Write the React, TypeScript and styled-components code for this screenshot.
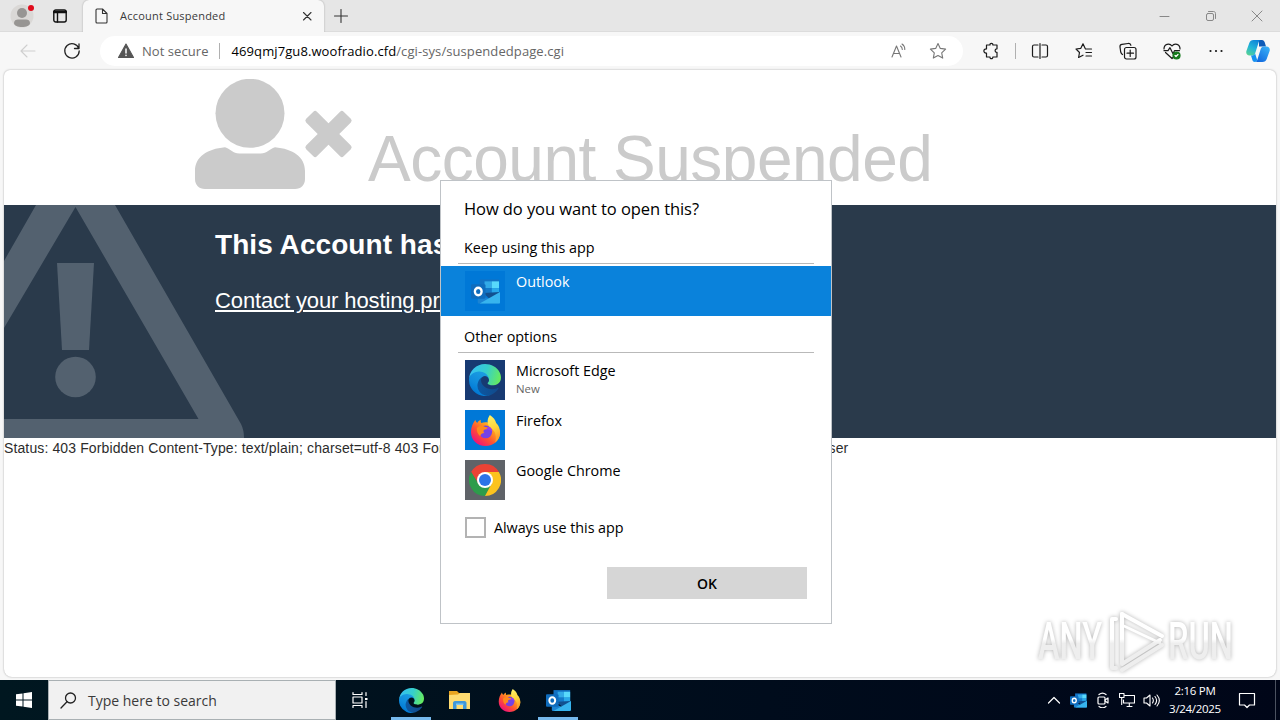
import React, { FC, ReactNode } from 'react';
import styled, { createGlobalStyle, css } from 'styled-components';

const GlobalStyle = createGlobalStyle`
  * {
    box-sizing: border-box;
  }
  body {
    margin: 0;
    overflow: hidden;
    font-family: 'Open Sans', 'Noto Sans', sans-serif;
  }
  svg {
    display: block;
    flex: none;
  }
`;

const Desktop = styled.div`
  position: relative;
  display: flex;
  flex-direction: column;
  width: 1280px;
  height: 720px;
  overflow: hidden;
  background: #f7f7f7;
`;

/* ---------- browser chrome ---------- */

const TabStrip = styled.div`
  display: flex;
  height: 32px;
  background: #e6e6e6;
  border-bottom: 1px solid #dcdcdc;
`;

const StripLeft = styled.div`
  display: flex;
  align-items: center;
  gap: 17px;
  width: 83px;
  padding-left: 10px;
`;

const Tab = styled.div`
  display: flex;
  align-items: center;
  width: 241px;
  height: 32px;
  padding: 0 10px 0 11px;
  border-radius: 6px 6px 0 0;
  background: #f7f7f7;
  box-shadow: 0 0 2px rgba(0, 0, 0, 0.3);
  clip-path: inset(0 -3px 0 -3px);
`;

const TabTitle = styled.span`
  flex: 1;
  margin-left: 10px;
  padding-bottom: 2px;
  color: #3a3a3a;
  font-size: 11px;
  letter-spacing: 0.22px;
`;

const NewTab = styled.div`
  display: flex;
  align-items: center;
  flex: 1;
  padding-left: 10px;
`;

const WindowButtons = styled.div`
  display: flex;
  align-items: center;
  gap: 34px;
  padding-right: 17px;
`;

const Toolbar = styled.div`
  display: flex;
  align-items: center;
  height: 38px;
  padding: 0 10px 0 19px;
`;

const NavButtons = styled.div`
  display: flex;
  align-items: center;
  gap: 26px;
  width: 81px;
`;

const AddressBar = styled.div`
  display: flex;
  align-items: center;
  width: 863px;
  height: 30px;
  padding: 0 16px 0 17px;
  border-radius: 15px;
  background: white;
  font-size: 13px;
`;

const NotSecure = styled.span`
  margin-left: 7px;
  color: #666;
  letter-spacing: 0.06px;
`;

const Divider = styled.span<{ $margin: string }>`
  width: 1px;
  height: 16px;
  margin: ${(p) => p.$margin};
  background: #b0b0b0;
`;

const Url = styled.span`
  flex: 1;
  color: #666;
  letter-spacing: 0.09px;
  b {
    color: black;
    font-weight: 400;
  }
`;

const AddressActions = styled.div`
  display: flex;
  gap: 21px;
`;

const ToolbarActions = styled.div`
  display: flex;
  align-items: center;
  flex: 1;
  padding-left: 19px;
`;

const ActionGroup = styled.div`
  display: flex;
  align-items: center;
  gap: 26px;
  margin-right: auto;
`;

/* ---------- page ---------- */

const Page = styled.main`
  height: 607px;
  margin: 0 4px 3px;
  border-radius: 6px 6px 8px 8px;
  background: white;
  box-shadow: 0 0 2px rgba(0, 0, 0, 0.35);
  overflow: hidden;
  font-family: 'Liberation Sans', Arial, sans-serif;
`;

const PageHeader = styled.header`
  display: flex;
  align-items: flex-end;
  gap: 15px;
  height: 135px;
  padding: 0 0 16px 191px;
  color: #cbcbcb;
`;

const PageTitle = styled.h1`
  margin: 0 0 -7px;
  font-size: 64px;
  font-weight: 400;
  line-height: 74px;
  letter-spacing: -0.5px;
  white-space: nowrap;
`;

const Banner = styled.section`
  display: flex;
  height: 233px;
  background: #2a3a4b;
  color: white;
`;

const BannerText = styled.div`
  margin-left: -33px;
  padding-top: 24px;
`;

const BannerTitle = styled.h2`
  margin: 0 0 25px;
  font-size: 28px;
  font-weight: 700;
  line-height: 32px;
  letter-spacing: 0.06px;
  white-space: nowrap;
`;

const BannerLink = styled.a`
  font-size: 22px;
  line-height: 30px;
  letter-spacing: -0.12px;
  text-decoration: underline;
`;

const StatusLine = styled.p`
  margin: 0;
  padding-top: 2px;
  color: #2c2c2c;
  font-size: 14px;
  line-height: 17px;
  letter-spacing: 0.12px;
  white-space: nowrap;
`;

const Watermark = styled.svg`
  position: absolute;
  left: 1030px;
  top: 602px;
  overflow: visible;
  filter: drop-shadow(0 0 2px rgba(0, 0, 0, 0.3));
`;

/* ---------- dialog ---------- */

const Dialog = styled.div`
  position: absolute;
  left: 440px;
  top: 180px;
  display: flex;
  flex-direction: column;
  width: 392px;
  height: 444px;
  border: 1px solid #bfc3c7;
  background: white;
  color: black;
  font-size: 14.35px;
`;

const DialogTitle = styled.div`
  padding: 17px 0 0 23px;
  font-size: 16.5px;
  line-height: 22px;
  letter-spacing: -0.08px;
`;

const GroupTitle = styled.div<{ $top: number }>`
  margin: ${(p) => p.$top}px 17px 0;
  padding-left: 6px;
  height: 26px;
  border-bottom: 1px solid #b9b9b9;
  line-height: 20px;
`;

const AppList = styled.div`
  padding-top: 2px;
`;

const AppRow = styled.div<{ $selected?: boolean }>`
  display: flex;
  gap: 11px;
  height: 50px;
  padding: 5px 0 0 24px;
  ${(p) =>
    p.$selected &&
    css`
      background: #0a82db;
      color: white;
      margin-top: 2px;
    `}
`;

const AppTile = styled.div<{ $color: string }>`
  display: flex;
  align-items: center;
  justify-content: center;
  width: 40px;
  height: 40px;
  background: ${(p) => p.$color};
`;

const AppName = styled.div`
  display: flex;
  flex-direction: column;
  line-height: 22px;
  small {
    color: #666;
    font-size: 11.4px;
    line-height: 14px;
  }
`;

const AlwaysRow = styled.label`
  display: flex;
  align-items: center;
  gap: 8px;
  margin: 12px 0 0 24px;
  letter-spacing: -0.06px;
`;

const CheckBox = styled.span`
  width: 21px;
  height: 21px;
  border: 2px solid #b3b3b3;
`;

const OkButton = styled.button`
  align-self: flex-end;
  width: 200px;
  height: 32px;
  margin: 29px 24px 0 0;
  padding: 0;
  border: 0;
  background: #d6d6d6;
  color: black;
  font: 600 14px 'Open Sans', sans-serif;
`;

/* ---------- taskbar ---------- */

const Taskbar = styled.footer`
  display: flex;
  height: 40px;
  background: linear-gradient(90deg, #001720, #000c1c 60%, #000618);
  color: white;
`;

const StartButton = styled.div`
  display: flex;
  align-items: center;
  justify-content: center;
  width: 48px;
`;

const SearchBox = styled.div`
  display: flex;
  align-items: center;
  gap: 11px;
  width: 288px;
  padding-left: 11px;
  border: 1px solid #a9b0b3;
  background: #f1f1f1;
  color: #3a3a3a;
  font-size: 14px;
`;

const TaskView = styled.div`
  display: flex;
  align-items: center;
  justify-content: center;
  width: 48px;
  margin-right: 7px;
`;

const TaskButton = styled.div<{ $running?: boolean }>`
  display: flex;
  align-items: center;
  justify-content: center;
  width: 40px;
  margin-right: 9px;
  border-bottom: 3px solid ${(p) => (p.$running ? '#76b9ed' : 'transparent')};
  border-top: 3px solid transparent;
`;

const Tray = styled.div`
  display: flex;
  align-items: center;
  margin-left: auto;
  gap: 8px;
`;

const Clock = styled.div`
  width: 52px;
  margin: 0 9px 0 1px;
  font-size: 11.5px;
  line-height: 18px;
  letter-spacing: -0.3px;
  text-align: center;
  white-space: nowrap;
`;

const ShowDesktop = styled.div`
  width: 5px;
  height: 40px;
  margin-left: 11px;
  border-left: 1px solid #4b5260;
`;

/* ---------- icons ---------- */

interface IconProps {
  size?: number;
  color?: string;
  stroke?: number;
  children?: ReactNode;
}

const Icon: FC<IconProps> = ({ size = 18, color = '#1b1b1b', stroke = 1.1, children }) => (
  <svg
    width={size}
    height={size}
    viewBox={`0 0 ${size} ${size}`}
    fill="none"
    stroke={color}
    strokeWidth={stroke}
    strokeLinejoin="round"
    strokeLinecap="round"
  >
    {children}
  </svg>
);

const ProfileIcon = () => (
  <svg width="26" height="26" viewBox="0 0 26 26">
    <circle cx="12" cy="13" r="11.500" fill="#dad8d6" />
    <circle cx="12" cy="10" r="5" fill="#979593" />
    <path d="M4 20c0-2.500 2-3.500 4-3.500h8c2 0 4 1 4 3.500 0 2.800-4 4-8 4s-8-1.200-8-4z" fill="#979593" />
    <circle cx="21" cy="5" r="3" fill="#e00b1c" />
  </svg>
);

const EdgeIcon: FC<IconProps> = ({ size = 25 }) => (
  <svg width={size} height={size} viewBox="4.600 4.900 256 256">
    <defs>
      <linearGradient id="edgeDark" x1="63" y1="177" x2="241" y2="177" gradientUnits="userSpaceOnUse">
        <stop offset="0" stopColor="#0c59a4" />
        <stop offset="1" stopColor="#114a8b" />
      </linearGradient>
      <linearGradient id="edgeBlue" x1="140" y1="80" x2="50" y2="235" gradientUnits="userSpaceOnUse">
        <stop offset="0" stopColor="#1b9de2" />
        <stop offset="0.600" stopColor="#0f8bdc" />
        <stop offset="1" stopColor="#0078d4" />
      </linearGradient>
      <linearGradient id="edgeGreen" x1="20" y1="60" x2="250" y2="130" gradientUnits="userSpaceOnUse">
        <stop offset="0" stopColor="#35c1f1" />
        <stop offset="0.500" stopColor="#36cfcb" />
        <stop offset="1" stopColor="#66eb5e" />
      </linearGradient>
    </defs>
    <path
      fill="url(#edgeDark)"
      d="M235.680 195.460a93.730 93.730 0 0 1-10.540 4.710 101.870 101.870 0 0 1-35.900 6.460c-47.320 0-88.540-32.550-88.540-74.320A31.480 31.480 0 0 1 117.130 105c-42.800 1.800-53.800 46.400-53.800 72.530 0 73.880 68.090 81.370 82.760 81.370 7.910 0 19.840-2.300 27-4.560l1.310-.44a128.340 128.340 0 0 0 66.600-52.800 4 4 0 0 0-5.320-5.640z"
    />
    <path
      fill="url(#edgeBlue)"
      d="M110.340 246.340A79.200 79.200 0 0 1 87.600 225a80.720 80.720 0 0 1 29.530-120c3.120-1.470 8.450-4.130 15.540-4a32.350 32.350 0 0 1 25.690 13 31.880 31.880 0 0 1 6.360 18.660c0-.21 24.460-79.600-80-79.600-43.900 0-80 41.660-80 78.210a130.150 130.150 0 0 0 12.110 56 128 128 0 0 0 156.380 67.110 75.550 75.550 0 0 1-62.780-8z"
    />
    <path
      fill="url(#edgeGreen)"
      d="M156.940 153.780c-.81 1.050-3.300 2.500-3.300 5.660 0 2.610 1.700 5.120 4.720 7.230 14.380 10 41.490 8.680 41.560 8.680a59.560 59.560 0 0 0 30.270-8.350A61.380 61.380 0 0 0 260.490 114c.26-22.410-8-37.310-11.340-43.910C227.970 28.760 182.350 5 132.720 5a128 128 0 0 0-128 126.200c.48-36.540 36.800-66.050 80-66.050 3.500 0 23.460.34 42 10.070 16.340 8.580 24.900 18.940 30.850 29.210 6.180 10.670 7.280 24.150 7.280 29.520s-2.740 13.330-7.910 19.830z"
    />
  </svg>
);

const FirefoxIcon: FC<IconProps> = ({ size = 24 }) => (
  <svg width={size} height={size} viewBox="0 0 32 32">
    <defs>
      <linearGradient id="foxBody" x1="27" y1="4" x2="6" y2="29" gradientUnits="userSpaceOnUse">
        <stop offset="0" stopColor="#fff44f" />
        <stop offset="0.350" stopColor="#ffa01e" />
        <stop offset="0.650" stopColor="#ff5330" />
        <stop offset="1" stopColor="#f0107a" />
      </linearGradient>
      <linearGradient id="foxTail" x1="20" y1="0" x2="28" y2="22" gradientUnits="userSpaceOnUse">
        <stop offset="0" stopColor="#fff36b" />
        <stop offset="0.600" stopColor="#ffd43a" />
        <stop offset="1" stopColor="#ffa32a" />
      </linearGradient>
    </defs>
    <path
      fill="url(#foxBody)"
      d="M5.500 5c.3 1.500 1 2.600 2 3.300C8.400 6.600 9.700 5.600 11.200 5c-.4 1.200-.2 2.300.5 3.200 2-.7 5-.9 7.300-.2 6 0 12 4 12 10.500C31 26 24.500 32 16 32S1 26 1 17.500C1 12.500 3 8.500 5.500 5z"
    />
    <path
      fill="url(#foxTail)"
      d="M20.500 0c4 2.700 5.600 5.200 6.500 8.200 2.800 2.400 4 6 4 10.100-.2 4-2 7.700-5 10.200 1.800-6 .4-12-4.500-15-3.500-2.300-4.800-8.300-1-13.500z"
    />
    <circle cx="16.200" cy="17.500" r="6.600" fill="#7542e5" />
    <path
      fill="#ff8a1c"
      d="M7 13.500c1.500-2 4-3 6.500-2.300 1.300 1.400 2.800 1.600 5.300 1.700 0 1.300-2 2.200-4.100 2.400-1.200 1-1 2.400.2 3.200-2.600.2-4.400 1.700-4.400 3.500C8 20 6.800 17 7 13.500z"
    />
    <path fill="#9a3df0" d="M18.800 12c2.800.4 4.400 2.600 4.200 5.500-.8-1.400-2.200-2.300-4.500-2.400-1.500 0-2.700.2-4 .2 2-.4 4-1.500 4.300-3.300z" />
  </svg>
);

const ChromeIcon = () => (
  <svg width="32" height="32" viewBox="-16 -16 32 32">
    <path d="M-13.860-8A16 16 0 0 1 13.860-8L0-7.600-6.580 3.800z" fill="#ea4335" />
    <path d="M-13.860-8A16 16 0 0 0 0 16L6.580 3.800-6.580 3.800z" fill="#2d9c4b" />
    <path d="M13.860-8A16 16 0 0 1 0 16L6.580 3.800 0-8z" fill="#fcc31e" />
    <circle r="8" fill="white" />
    <circle r="6" fill="#2c74e8" />
  </svg>
);

const OutlookIcon: FC<IconProps> = ({ size = 26 }) => (
  <svg width={size} height={size} viewBox="1 1.500 30 30">
    <path fill="#1272c4" d="M10 4h20v17H10z" />
    <path fill="#32a9e7" d="M15 6h7.500v7H15z" />
    <path fill="#58d9fb" d="M22.500 6H30v7h-7.500z" />
    <path fill="#1479c9" d="M15 13h7.500v7H15z" />
    <path fill="#28a8ea" d="M22.500 13H30v5h-7.500z" />
    <path fill="#12508f" d="M14 18l17-1-10 8z" />
    <path fill="#1b83d3" d="M8 19l23 10H9c-.6 0-1-.5-1-1z" />
    <path fill="#37b4ee" d="M31 17v11c0 .6-.5 1-1 1H10z" />
    <rect x="1" y="9" width="15" height="15" rx="1.200" fill="#0f6cbd" />
    <ellipse cx="8.500" cy="16.500" rx="3.500" ry="3.900" fill="none" stroke="white" strokeWidth="2.400" />
  </svg>
);

const FolderIcon = () => (
  <svg width="24" height="24" viewBox="0 0 24 24">
    <path fill="#e9a520" d="M1 3h8l2 2h11v3H1z" />
    <path fill="#ffdc71" d="M1 7l9-.5L12 5h10v16H1z" />
    <path fill="#3f97d9" d="M5 21v-6c0-1 .6-2 2-2h9.500c1.400 0 2 1 2 2v6H15v-4H8.500v4z" />
    <path fill="#7cc4f2" d="M8 15.500h7.500V17H8z" />
  </svg>
);

const CopilotIcon = () => (
  <svg width="24" height="24" viewBox="0 0 24 24">
    <defs>
      <linearGradient id="copA" x1="12" y1="1" x2="3" y2="18" gradientUnits="userSpaceOnUse">
        <stop offset="0" stopColor="#0c7fd8" />
        <stop offset="0.500" stopColor="#22b4d8" />
        <stop offset="1" stopColor="#5fd68a" />
      </linearGradient>
      <linearGradient id="copB" x1="22" y1="7" x2="10" y2="23" gradientUnits="userSpaceOnUse">
        <stop offset="0" stopColor="#39b3f8" />
        <stop offset="1" stopColor="#0f62dc" />
      </linearGradient>
    </defs>
    <path fill="#0e5bb8" d="M13 1h3c1.500 0 2.300 1 2.700 2.300L20 7.500h-7z" />
    <path fill="url(#copA)" d="M7.500 1H15c-1.400 0-2 1.200-2.500 2.700L9.600 13c-.6 2-1.400 3.500-3.400 3.500H3.500C1 16.500-.3 14.500.4 12L3.300 4C4 2 5.300 1 7.500 1z" />
    <path fill="url(#copB)" d="M16.500 23H9c1.400 0 2-1.200 2.500-2.700L14.400 11c.6-2 1.400-3.500 3.400-3.500h2.700c2.500 0 3.800 2 3.100 4.500L20.700 20c-.7 2-2 3-4.200 3z" />
    <path fill="#1692f0" d="M5 16.500h1.200c1.400 0 2.300-.8 2.900-2l2.100 6.500C10.700 22.300 10 23 9 23c-1.500 0-2.300-1-2.700-2.300z" />
  </svg>
);

const SuspendedIcon = () => (
  <svg width="158" height="110" viewBox="0 0 158 110" fill="currentColor">
    <circle cx="55" cy="34.300" r="34.500" />
    <path d="M30 68.300C36 70 38 75 45 74.600h20C72 75 74 70 80 68.300 98 70 110 78 110 92v8c0 6-4 10-10 10H10c-6 0-10-4-10-10v-8C0 78 12 70 30 68.300z" />
    <g transform="translate(133.500 55) rotate(45)">
      <rect x="-26.500" y="-7.600" width="53" height="15.200" rx="2.500" />
      <rect x="-7.600" y="-26.500" width="15.200" height="53" rx="2.500" />
    </g>
  </svg>
);

const WarningArt = () => (
  <svg width="244" height="233" viewBox="4 205 244 233" fill="#53616f">
    <path
      fillRule="evenodd"
      d="M36 205H115L241 424Q244 430 244 438H4V419H198.500L75.500 207 4 328V261z"
    />
    <path d="M57 263h37l-5 87H62z" />
    <circle cx="75.500" cy="377" r="20.300" />
  </svg>
);

const AnyRunMark = () => (
  <Watermark width="212" height="74" viewBox="0 0 212 74">
    <defs>
      <linearGradient id="fade" x1="0" y1="0" x2="0" y2="74" gradientUnits="userSpaceOnUse">
        <stop offset="0.500" stopColor="#ffffff" />
        <stop offset="0.560" stopColor="#eeeeee" />
      </linearGradient>
    </defs>
    <g fill="url(#fade)" fontFamily="Roboto, sans-serif" fontSize="51" fontWeight="500">
      <text x="8" y="57" textLength="64" lengthAdjust="spacingAndGlyphs">ANY</text>
      <text x="138" y="57" textLength="65" lengthAdjust="spacingAndGlyphs">RUN</text>
    </g>
    <g fill="none" stroke="url(#fade)" strokeWidth="4" strokeLinejoin="round" strokeLinecap="round">
      <path d="M92 12v50l38-24" />
      <path d="M92 12l40 22" />
      <path d="M94 24l36 17" strokeWidth="2.500" />
      <path d="M86 17h-4v49h4" />
      <path d="M92 68l40-25" />
    </g>
  </Watermark>
);

interface AppItemProps {
  name: string;
  note?: string;
  color: string;
  icon: ReactNode;
  selected?: boolean;
}

const AppItem: FC<AppItemProps> = ({ name, note, color, icon, selected }) => (
  <AppRow $selected={selected}>
    <AppTile $color={color}>{icon}</AppTile>
    <AppName>
      {name}
      {note && <small>{note}</small>}
    </AppName>
  </AppRow>
);

const BrowserBars = () => (
  <>
    <TabStrip>
      <StripLeft>
        <ProfileIcon />
        <Icon size={14} stroke={1.4} color="#111">
          <rect x="0.800" y="1" width="12.400" height="12" rx="2" />
          <path d="M1 3h12" strokeWidth="2.500" />
          <path d="M4.500 4v9" />
        </Icon>
      </StripLeft>
      <Tab>
        <Icon size={16} color="#333">
          <path d="M2 2c0-.6.400-1 1-1h5.500L13 5.500V14c0 .6-.4 1-1 1H3c-.6 0-1-.4-1-1zM8.500 1v4.500H13" />
        </Icon>
        <TabTitle>Account Suspended</TabTitle>
        <Icon size={14} color="#333">
          <path d="M3.500 3.500l7.500 7.500M11 3.500L3.500 11" />
        </Icon>
      </Tab>
      <NewTab>
        <Icon size={14} color="#333">
          <path d="M7 .5v13M.5 7h13" />
        </Icon>
      </NewTab>
      <WindowButtons>
        <Icon size={12} color="#888" stroke={1}>
          <path d="M1 6.500h9" />
        </Icon>
        <Icon size={12} color="#888" stroke={1}>
          <rect x="1.500" y="3.500" width="7" height="7" rx="1.500" />
          <path d="M3.500 1.500h5c1.200 0 2 .8 2 2v5" />
        </Icon>
        <Icon size={12} color="#888" stroke={1}>
          <path d="M1 1l10 10M11 1L1 11" />
        </Icon>
      </WindowButtons>
    </TabStrip>
    <Toolbar>
      <NavButtons>
        <Icon color="#cfcfcf">
          <path d="M16 9H2M8 3L2 9l6 6" />
        </Icon>
        <Icon color="#222" stroke={1.3}>
          <path d="M15.800 6.500A7.200 7.200 0 1 0 16.200 9M16 2v4.500h-4.500" />
        </Icon>
      </NavButtons>
      <AddressBar>
        <Icon color="#555">
          <path d="M9 2L1.500 15.500h15z" fill="#555" />
          <path d="M9 7v4M9 13.300v.3" stroke="white" strokeWidth="1.500" />
        </Icon>
        <NotSecure>Not secure</NotSecure>
        <Divider $margin="0 12px 0 10px" />
        <Url>
          <b>469qmj7gu8.woofradio.cfd</b>/cgi-sys/suspendedpage.cgi
        </Url>
        <AddressActions>
          <Icon color="#777">
            <path d="M2 15L6.500 4 11 15M3.500 11.500h6M10.500 4c1.200.8 1.800 2 1.800 3.500M12 2c2 1.300 2.800 3 2.800 5.500" />
          </Icon>
          <Icon color="#777">
            <path d="M9 1.500l2.300 4.900 5.300.7-3.900 3.700 1 5.300L9 13.500l-4.700 2.600 1-5.300L1.400 7.100l5.300-.7z" />
          </Icon>
        </AddressActions>
      </AddressBar>
      <ToolbarActions>
        <Icon stroke={1.2}>
          <path d="M4.500 3H8C7.500.8 11.300.8 10.800 3H15v3.800c-2.500-.3-2.500 3.900 0 3.600V15h-4.200c.5 2.200-3.300 2.200-2.800 0H4.500v-4C1 11.500 1 6.500 4.500 7z" />
        </Icon>
        <Divider $margin="0 15px" />
        <ActionGroup>
          <Icon stroke={1.2}>
            <path d="M7 3H3c-1 0-1.500.5-1.500 1.500v9c0 .8.500 1.500 1.500 1.500h4M11 3h4c1 0 1.500.5 1.500 1.500v9c0 .8-.5 1.500-1.500 1.500h-4M9 1.500v15" />
          </Icon>
          <Icon stroke={1.2}>
            <path d="M10.200 6.500L8 1.800 5.700 6.400 1 7l3.500 3.500-.9 5L8 13.200M10.500 7h6M11 10.500h5.500M11 14h5.500" />
          </Icon>
          <Icon stroke={1.2}>
            <rect x="5.500" y="5.500" width="11.500" height="11.500" rx="2" />
            <path d="M11.200 8v6.500M8 11.200h6.500M3.500 12.500C2.500 12 2 11 1.700 10L1 5c-.2-1.400.7-2.400 2-2.600L9 1.500c1.500-.2 2.500.7 2.900 1.800" />
          </Icon>
          <Icon stroke={1.2}>
            <path d="M1 7C.8 2 6.500.5 9 4c2.500-3.500 8.200-2 8 3M2.500 10.500L9 16.500l2-2M1 8.700h4l2-3 3 6 1.500-3h5" />
            <circle cx="13.500" cy="13.500" r="3.500" fill="#13781a" stroke="#13781a" />
            <path d="M12 13.500l1 1 2-2" stroke="white" />
          </Icon>
          <Icon>
            <path d="M3.500 9h.01M9 9h.01M14.500 9h.01" strokeWidth="2.200" />
          </Icon>
        </ActionGroup>
        <CopilotIcon />
      </ToolbarActions>
    </Toolbar>
  </>
);

const OpenWithDialog = () => (
  <Dialog>
    <DialogTitle>How do you want to open this?</DialogTitle>
    <GroupTitle $top={18}>Keep using this app</GroupTitle>
    <AppItem selected name="Outlook" color="#0078d7" icon={<OutlookIcon size={29} />} />
    <GroupTitle $top={11}>Other options</GroupTitle>
    <AppList>
      <AppItem name="Microsoft Edge" note="New" color="#173a72" icon={<EdgeIcon size={32} />} />
      <AppItem name="Firefox" color="#0078d7" icon={<FirefoxIcon size={31} />} />
      <AppItem name="Google Chrome" color="#5f6368" icon={<ChromeIcon />} />
    </AppList>
    <AlwaysRow>
      <CheckBox />
      Always use this app
    </AlwaysRow>
    <OkButton>OK</OkButton>
  </Dialog>
);

const TaskbarView = () => (
  <Taskbar>
    <StartButton>
      <svg width="16" height="16" viewBox="0 0 16 16" fill="white">
        <path d="M0 2.300L6.500 1.400v6.100H0zM7.500 1.200L16 0v7.500H7.500zM0 8.500h6.500v6.100L0 13.700zM7.500 8.500H16V16l-8.500-1.200z" />
      </svg>
    </StartButton>
    <SearchBox>
      <Icon size={17} color="#222" stroke={1.3}>
        <circle cx="10.500" cy="6" r="5" />
        <path d="M7 9.700L1 16" />
      </Icon>
      Type here to search
    </SearchBox>
    <TaskView>
      <Icon size={18} color="white" stroke={1.2}>
        <path d="M2 1.500v2h9v-2M2 16.500v-2h9v2M2 6h9v6H2zM15 1.500v3M15 10.500v6" />
        <path d="M14 7h2.500v2H14z" fill="white" stroke="none" />
      </Icon>
    </TaskView>
    <TaskButton $running>
      <EdgeIcon size={25} />
    </TaskButton>
    <TaskButton>
      <FolderIcon />
    </TaskButton>
    <TaskButton>
      <FirefoxIcon size={23} />
    </TaskButton>
    <TaskButton $running>
      <OutlookIcon size={25} />
    </TaskButton>
    <Tray>
      <Icon size={16} color="white" stroke={1.2}>
        <path d="M2.500 11L8 5.500l5.500 5.500" />
      </Icon>
      <OutlookIcon size={17} />
      <Icon size={16} color="white" stroke={1.2}>
        <rect x="3" y="5" width="7" height="7" rx="1" />
        <path d="M10 8l3-2v5l-3-2M4 2.500C6 .8 9 .8 11 2.500M4 14.500c2 1.500 5 1.500 7 0" />
      </Icon>
      <Icon size={16} color="white" stroke={1.1}>
        <path d="M6 3.500h9.500v7.500H4.500V8M8 14.500h5M10.300 11v3.500M.5 1.500h4.500v4H.5zM2.700 5.500v7" />
      </Icon>
      <Icon size={17} color="white" stroke={1.1}>
        <path d="M1 6h2.500L7 3v11L3.500 11H1zM9.500 6c1 1.500 1 3.500 0 5M12 4.500c2 2.500 2 5.500 0 8M14 3c3 3.500 3 7.500 0 11" />
      </Icon>
      <Clock>
        2:16 PM
        <br />
        3/24/2025
      </Clock>
      <Icon size={18} color="white" stroke={1.2}>
        <path d="M1.500 2.500h15v11.500h-5L9 16.500 6.500 14h-5z" />
      </Icon>
      <ShowDesktop />
    </Tray>
  </Taskbar>
);

const App = () => (
  <>
    <GlobalStyle />
    <Desktop>
      <BrowserBars />
      <Page>
        <PageHeader>
          <SuspendedIcon />
          <PageTitle>Account Suspended</PageTitle>
        </PageHeader>
        <Banner>
          <WarningArt />
          <BannerText>
            <BannerTitle>This Account has been suspended.</BannerTitle>
            <BannerLink>Contact your hosting provider for more information.</BannerLink>
          </BannerText>
        </Banner>
        <StatusLine>
          Status: 403 Forbidden Content-Type: text/plain; charset=utf-8 403 Forbidden Executing in an
          invalid environment for the supplied user
        </StatusLine>
      </Page>
      <TaskbarView />
      <AnyRunMark />
      <OpenWithDialog />
    </Desktop>
  </>
);

export default App;
